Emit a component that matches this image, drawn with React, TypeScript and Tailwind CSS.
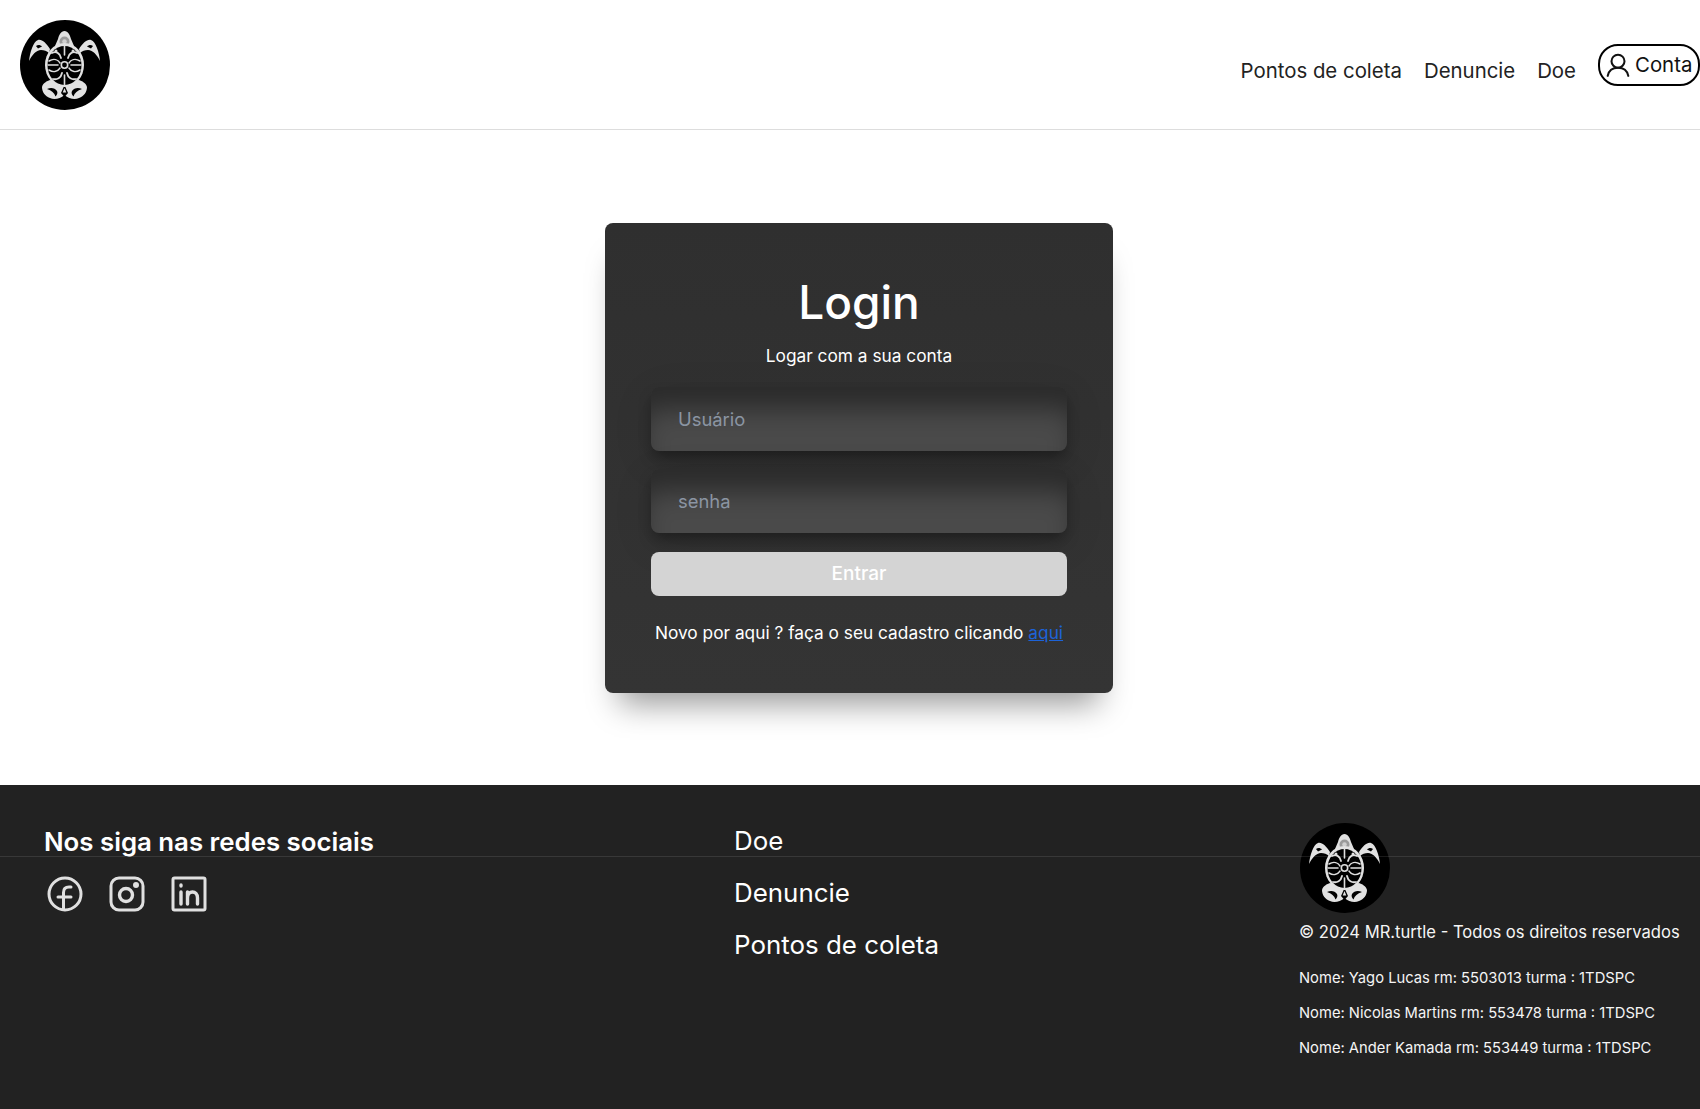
import React from "react";

function Turtle({ className }: { className?: string }) {
  return (
    <svg viewBox="0 0 90 90" className={className}>
      <circle cx="45" cy="45" r="45" fill="#000" />
      {/* head */}
      <path d="M44.500 11c3.500 0 5.500 4 6.500 8l3 7H35l3-7c1-4 3-8 6.500-8z" fill="#e0e0e0" />
      <circle cx="44.500" cy="21.500" r="5" fill="#9a9a9a" />
      <circle cx="44.500" cy="21.500" r="2.300" fill="#cfcfcf" />
      {/* front flippers */}
      <path d="M30 29C26 23 22 19 18 20 13 22 10 32 9 41c3-6 7-11 12-11 3 0 6 1 8 3z" fill="#e2e2e2" />
      <path d="M59 29c4-6 8-10 12-9 5 2 8 12 9 21-3-6-7-11-12-11-3 0-6 1-8 3z" fill="#e2e2e2" />
      <path d="M16 26c2-1.500 4-1.500 6 .5l-4 2z" fill="#000" />
      <path d="M73 26c-2-1.500-4-1.500-6 .5l4 2z" fill="#000" />
      {/* rear flippers */}
      <path d="M30 60c-3 1-7 3-8 7 0 5 3 9 8 11 4 2 10 1 14.500-3l1-12z" fill="#e2e2e2" />
      <path d="M59 60c3 1 7 3 8 7 0 5-3 9-8 11-4 2-10 1-14.500-3l-1-12z" fill="#e2e2e2" />
      <path d="M27 69c4-2 8-1 10 2 1 2 0 4-1.500 5.500-1-3.500-4-6-8.500-7.500z" fill="#000" />
      <path d="M62 69c-4-2-8-1-10 2-1 2 0 4 1.500 5.500 1-3.500 4-6 8.500-7.500z" fill="#000" />
      <path d="M44.500 65l3.500 8-3.500 4-3.500-4z" fill="#000" />
      <path d="M44.500 68l1.800 4.500h-3.600z" fill="#e2e2e2" />
      {/* shell */}
      <ellipse cx="44.500" cy="45" rx="19.500" ry="22" fill="#e2e2e2" />
      <ellipse cx="44.500" cy="45.500" rx="17" ry="19.500" fill="#000" />
      <g fill="none" stroke="#dedede" strokeLinecap="round">
        <path d="M44.500 26v9M44.500 55v10M28 45h10M51 45h10" strokeWidth="1.600" />
        <path d="M32 33c4-2 8 0 9 5" strokeWidth="1.800" />
        <path d="M57 33c-4-2-8 0-9 5" strokeWidth="1.800" />
        <path d="M29 41c5-3 9-1 11 2" strokeWidth="1.500" />
        <path d="M60 41c-5-3-9-1-11 2" strokeWidth="1.500" />
        <path d="M29 50c5 3 9 1 11-2" strokeWidth="1.500" />
        <path d="M60 50c-5 3-9 1-11-2" strokeWidth="1.500" />
        <path d="M33 59c4 1 8-1 9-6" strokeWidth="1.800" />
        <path d="M56 59c-4 1-8-1-9-6" strokeWidth="1.800" />
        <circle cx="44.500" cy="45" r="3.200" strokeWidth="1.600" />
      </g>
      <g fill="#dedede">
        <circle cx="36" cy="31" r="1.500" />
        <circle cx="53" cy="31" r="1.500" />
      </g>
    </svg>
  );
}

function Social({ children }: { children: React.ReactNode }) {
  return (
    <svg viewBox="0 0 36 36" className="w-9 h-9" fill="none" stroke="#e0e0e0" strokeWidth="3" strokeLinecap="round" strokeLinejoin="round">
      {children}
    </svg>
  );
}

const inputClass =
  "w-full h-[64px] rounded-lg bg-[#4a4a4a] shadow-[inset_0_30px_26px_-8px_rgba(0,0,0,0.42),0_8px_14px_-2px_rgba(0,0,0,0.35),0_10px_40px_rgba(0,0,0,0.1)] flex items-center pl-[27px] pt-[2px] text-[18.400px] text-[#8b95a3]";

export default function App() {
  return (
    <div className="min-h-[1109px] flex flex-col bg-white font-['Inter',sans-serif]">
      <header className="h-[130px] flex justify-between border-b border-[#dddddd] pl-5">
        <Turtle className="w-[90px] h-[90px] mt-5" />
        <nav className="flex items-start gap-[22px] text-[#222222] text-[20.400px] leading-6">
          <a className="mt-[59px]">Pontos de coleta</a>
          <a className="mt-[59px]">Denuncie</a>
          <a className="mt-[59px]">Doe</a>
          <a className="mt-[44px] h-[42px] w-[102px] border-2 border-black rounded-[20px] flex items-center gap-[4px] pl-[5px] text-[#111111]">
            <svg viewBox="0 0 24 24" className="w-[26px] h-[26px]" fill="none" stroke="#111" strokeWidth="1.900" strokeLinecap="round">
              <circle cx="12" cy="8.500" r="6" />
              <path d="M2.500 22c1-5 4.500-7.500 9.500-7.500s8.500 2.500 9.500 7.500" />
            </svg>
            Conta
          </a>
        </nav>
      </header>

      <main className="h-[655px] flex justify-center pt-[93px] pl-[18px]">
        <div className="w-[508px] h-[470px] rounded-lg bg-linear-to-b from-[#2f2f2f] to-[#343434] shadow-[0_25px_30px_-14px_rgba(0,0,0,0.4)] px-[46px] flex flex-col items-center">
          <h1 className="mt-[50px] text-[46px] leading-[58px] font-medium text-white">Login</h1>
          <p className="mt-[13px] text-[17.300px] leading-6 text-white">Logar com a sua conta</p>
          <div className={`mt-[19px] ${inputClass}`}>Usuário</div>
          <div className={`mt-[18px] ${inputClass}`}>senha</div>
          <button className="mt-[19px] w-full h-[44px] rounded-lg bg-[#d4d4d4] text-white text-[19px] font-medium pt-px">Entrar</button>
          <p className="mt-[25px] text-[17.300px] leading-6 text-white whitespace-nowrap">
            Novo por aqui ? faça o seu cadastro clicando <a className="text-[#1d63d8] underline">aqui</a>
          </p>
        </div>
      </main>

      <footer className="relative flex-1 h-[324px] bg-[#222222] text-white flex">
        <div className="w-[734px] pl-[44px] pt-[41px]">
          <h2 className="text-[25.800px] leading-[32px] font-semibold">Nos siga nas redes sociais</h2>
          <div className="flex gap-[26px] mt-[18px] ml-[3px]">
            <Social>
              <circle cx="18" cy="18" r="16" />
              <path d="M24 11h-2c-3.500 0-5.500 2-5.500 5.500V33M11 21h13" />
            </Social>
            <Social>
              <rect x="2" y="2" width="32" height="32" rx="8" />
              <circle cx="17" cy="19" r="6.500" strokeWidth="3.400" />
              <circle cx="27" cy="9" r="1.500" fill="#e0e0e0" />
            </Social>
            <Social>
              <rect x="2" y="2" width="32" height="32" rx="1.500" />
              <path d="M10 16v12M10 9v1M16.500 28V16M16.500 22c0-4 2.500-6 5-6s5 2 5 6v6" strokeWidth="3.400" />
            </Social>
          </div>
        </div>
        <div className="w-[565px] pt-[40px] text-[25.900px] leading-[32px] flex flex-col gap-[20px]">
          <a>Doe</a>
          <a>Denuncie</a>
          <a>Pontos de coleta</a>
        </div>
        <div className="pt-[39px]">
          <Turtle className="w-[90px] h-[90px] ml-px -mt-px" />
          <p className="mt-[7px] text-[16.600px] leading-[24px] whitespace-nowrap text-[#f5f5f5]">© 2024 MR.turtle - Todos os direitos reservados</p>
          <div className="mt-[24px] flex flex-col gap-[15px] text-[14.750px] leading-[20px] text-[#f5f5f5] whitespace-nowrap">
            <p>Nome: Yago Lucas rm: 5503013 turma : 1TDSPC</p>
            <p>Nome: Nicolas Martins rm: 553478 turma : 1TDSPC</p>
            <p>Nome: Ander Kamada rm: 553449 turma : 1TDSPC</p>
          </div>
        </div>
        <div className="absolute left-0 right-0 top-[71px] h-px bg-[#ffffff]/10" />
      </footer>
    </div>
  );
}
